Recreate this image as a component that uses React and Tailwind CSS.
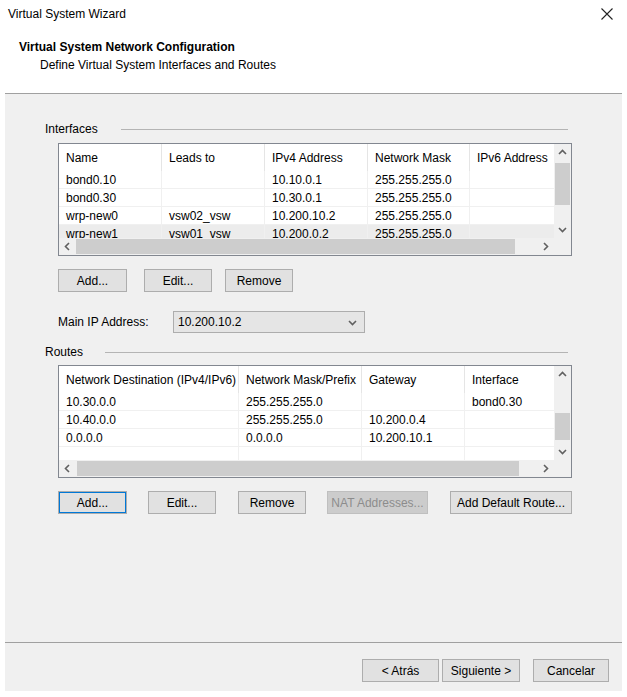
import React from 'react'

const interfaceColumns = [
  { label: 'Name', w: 'w-[103px]' },
  { label: 'Leads to', w: 'w-[103px]' },
  { label: 'IPv4 Address', w: 'w-[103px]' },
  { label: 'Network Mask', w: 'w-[102px]' },
  { label: 'IPv6 Address', w: 'w-[103px]' },
]

const interfaceRows = [
  ['bond0.10', '', '10.10.0.1', '255.255.255.0', ''],
  ['bond0.30', '', '10.30.0.1', '255.255.255.0', ''],
  ['wrp-new0', 'vsw02_vsw', '10.200.10.2', '255.255.255.0', ''],
  ['wrp-new1', 'vsw01_vsw', '10.200.0.2', '255.255.255.0', ''],
]

const routeColumns = [
  { label: 'Network Destination (IPv4/IPv6)', w: 'w-[180px]' },
  { label: 'Network Mask/Prefix', w: 'w-[123px]' },
  { label: 'Gateway', w: 'w-[103px]' },
  { label: 'Interface', w: 'w-[100px]' },
]

const routeRows = [
  ['10.30.0.0', '255.255.255.0', '', 'bond0.30'],
  ['10.40.0.0', '255.255.255.0', '10.200.0.4', ''],
  ['0.0.0.0', '0.0.0.0', '10.200.10.1', ''],
  ['', '', '', ''],
]

function Chevron({ dir }) {
  const d = {
    up: 'M1 6 L4.5 2.5 L8 6',
    down: 'M1 3 L4.5 6.5 L8 3',
    left: 'M6 1 L2.5 4.5 L6 8',
    right: 'M3 1 L6.5 4.5 L3 8',
  }[dir]
  return (
    <svg width="9" height="9" viewBox="0 0 9 9">
      <path d={d} fill="none" stroke="#606060" strokeWidth="1.6" />
    </svg>
  )
}

function Button({ children, className = '' }) {
  return (
    <button
      type="button"
      className={`flex h-[23px] shrink-0 items-center justify-center border border-[#adadad] bg-[#e1e1e1] text-[12px] text-black ${className}`}
    >
      {children}
    </button>
  )
}

function GroupLabel({ children, gap }) {
  return (
    <div className="flex h-[14px] items-center">
      <span className="leading-[14px]">{children}</span>
      <div className={`h-px flex-1 bg-[#b4b4b4] ${gap}`} />
    </div>
  )
}

function ListView({ columns, rows, vThumb, hThumb, stripeLast }) {
  return (
    <div className="ml-[13px] flex h-[113px] w-[514px] flex-col border border-[#828790] bg-white">
      <div className="flex h-[94px]">
        <div className="flex-1 overflow-hidden">
          <div className="flex h-[27px] items-center">
            {columns.map((col) => (
              <div key={col.label} className={`${col.w} flex h-full shrink-0 items-center whitespace-nowrap border-r border-[#e5e5e5] pl-[7px]`}>
                {col.label}
              </div>
            ))}
          </div>
          {rows.map((row, i) => (
            <div
              key={i}
              className={`flex h-[18px] border-b border-[#f0f0f0] ${stripeLast && i === rows.length - 1 ? 'bg-[#ececec]' : ''}`}
            >
              {row.map((cell, j) => (
                <div key={j} className={`${columns[j].w} flex shrink-0 items-center whitespace-nowrap border-r border-[#f0f0f0] pl-[7px] leading-[18px]`}>
                  {cell}
                </div>
              ))}
            </div>
          ))}
        </div>
        <div className="flex w-[17px] flex-col items-center bg-[#f0f0f0]">
          <div className="flex h-[17px] w-full items-center justify-center">
            <Chevron dir="up" />
          </div>
          <div className={`w-[15px] bg-[#cdcdcd] ${vThumb}`} />
          <div className="flex-1" />
          <div className="flex h-[17px] w-full items-center justify-center">
            <Chevron dir="down" />
          </div>
        </div>
      </div>
      <div className="flex h-[17px]">
        <div className="flex flex-1 items-center bg-[#f0f0f0]">
          <div className="flex h-[17px] w-[17px] items-center justify-center">
            <Chevron dir="left" />
          </div>
          <div className={`h-[15px] bg-[#cdcdcd] ${hThumb}`} />
          <div className="flex-1" />
          <div className="flex h-[17px] w-[17px] items-center justify-center">
            <Chevron dir="right" />
          </div>
        </div>
        <div className="w-[17px] bg-[#f0f0f0]" />
      </div>
    </div>
  )
}

export default function App() {
  return (
    <div className="h-[697px] w-[627px] bg-white font-['Liberation_Sans',Arial,sans-serif] text-[12px] text-black">
      <div className="flex h-[28px] items-center justify-between pl-[8px] pr-[14px]">
        <span>Virtual System Wizard</span>
        <svg width="12" height="12" viewBox="0 0 12 12">
          <path d="M0.5 0.5 L11.5 11.5 M11.5 0.5 L0.5 11.5" stroke="#222" strokeWidth="1.1" />
        </svg>
      </div>

      <div className="h-[65px] pl-[19px] pt-[12px]">
        <div className="text-[12px] font-bold leading-[14px]">Virtual System Network Configuration</div>
        <div className="mt-[4px] pl-[21px] leading-[14px]">Define Virtual System Interfaces and Routes</div>
      </div>

      <div className="mx-[5px] h-[549px] border-t border-[#a0a0a0] bg-[#f0f0f0] pl-[40px] pr-[54px] pt-[28px]">
        <GroupLabel gap="ml-[23px]">Interfaces</GroupLabel>
        <div className="mt-[7px]">
          <ListView columns={interfaceColumns} rows={interfaceRows} vThumb="mt-[2px] h-[42px]" hThumb="w-[439px]" stripeLast />
        </div>
        <div className="ml-[13px] mt-[13px] flex">
          <Button className="w-[69px]">Add...</Button>
          <Button className="ml-[17px] w-[68px]">Edit...</Button>
          <Button className="ml-[13px] w-[68px]">Remove</Button>
        </div>

        <div className="ml-[13px] mt-[19px] flex h-[22px] items-center">
          <span className="w-[115px]">Main IP Address:</span>
          <div className="flex h-[22px] w-[192px] items-center justify-between border border-[#adadad] bg-[#e5e5e5] pl-[4px] pr-[7px]">
            <span>10.200.10.2</span>
            <Chevron dir="down" />
          </div>
        </div>

        <div className="mt-[12px]">
          <GroupLabel gap="ml-[22px]">Routes</GroupLabel>
        </div>
        <div className="mt-[6px]">
          <ListView columns={routeColumns} rows={routeRows} vThumb="mt-[30px] h-[27px]" hThumb="ml-[1px] w-[442px]" />
        </div>
        <div className="ml-[13px] mt-[13px] flex">
          <Button className="w-[69px] border-[#0078d7] outline outline-1 outline-[#0078d7] -outline-offset-2">Add...</Button>
          <Button className="ml-[21px] w-[68px]">Edit...</Button>
          <Button className="ml-[22px] w-[68px]">Remove</Button>
          <button
            type="button"
            className="ml-[21px] flex h-[23px] w-[101px] shrink-0 items-center justify-center border border-[#bfbfbf] bg-[#cccccc] text-[12px] text-[#8c8c8c]"
          >
            NAT Addresses...
          </button>
          <Button className="ml-[22px] w-[122px]">Add Default Route...</Button>
        </div>
      </div>

      <div className="mx-[5px] flex h-[49px] justify-end border-t border-[#a0a0a0] bg-[#f0f0f0] pr-[13px] pt-[16px]">
        <Button className="h-[22px] w-[77px]">&lt; Atrás</Button>
        <Button className="ml-[3px] h-[22px] w-[78px]">Siguiente &gt;</Button>
        <Button className="ml-[13px] h-[22px] w-[76px]">Cancelar</Button>
      </div>
    </div>
  )
}
